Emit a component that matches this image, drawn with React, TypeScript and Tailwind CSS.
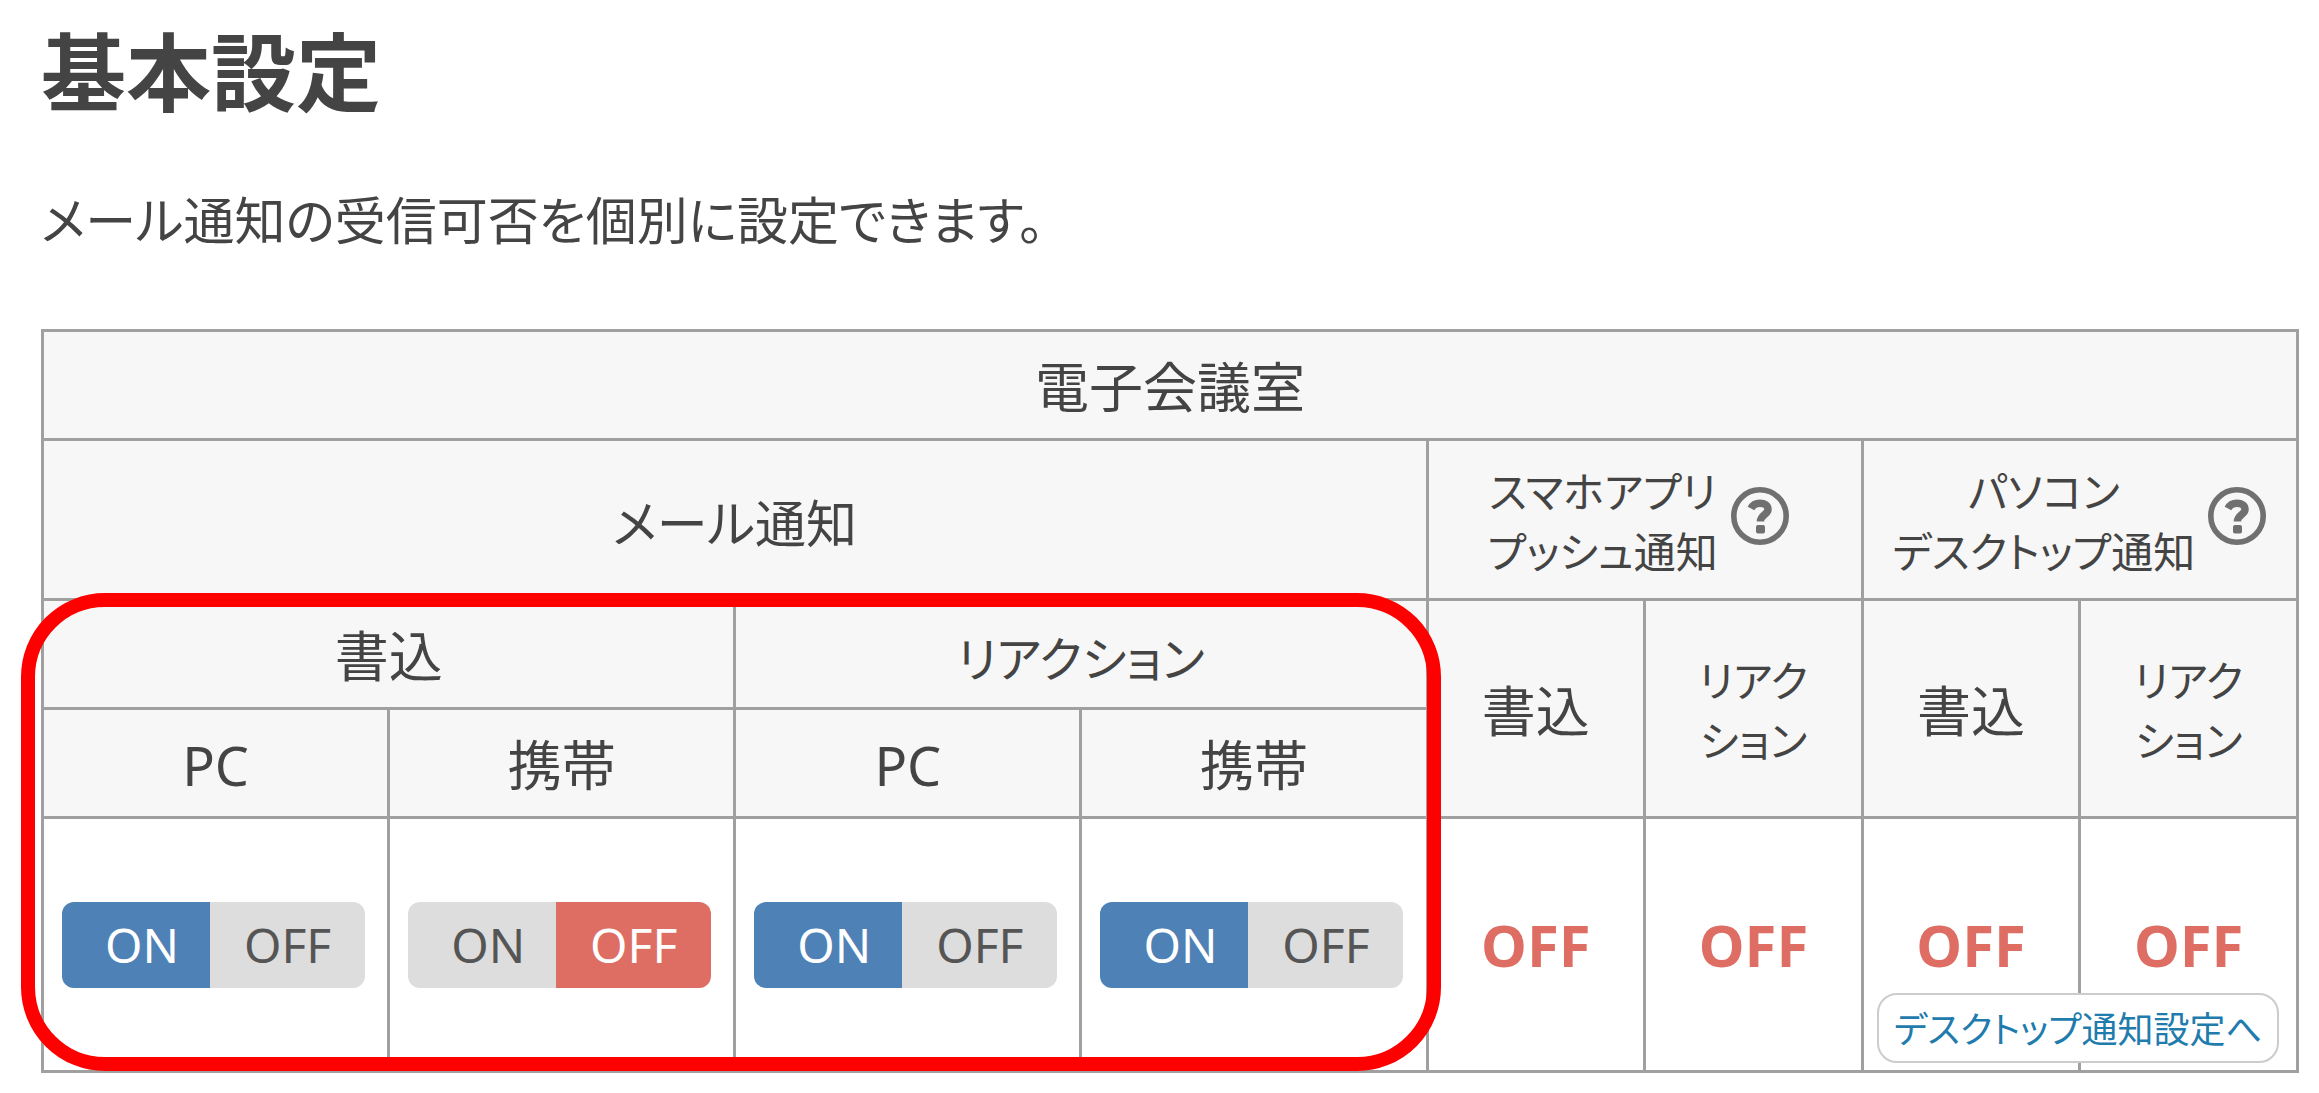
import React, { useState } from "react";

interface IToggle {
  name: string;
  label: string;
  initial: boolean;
}

const Toggle: React.FC<IToggle> = ({ name, label, initial }: IToggle) => {
  const [on, setOn] = useState(initial);

  return (
    <div
      role="radiogroup"
      aria-label={label}
      className="mr-1 inline-flex h-[86px] overflow-hidden rounded-xl align-middle text-5xl leading-none"
    >
      <label
        className={`relative flex w-[148px] cursor-pointer items-center justify-center pl-3 ${
          on ? "bg-[#4e81b6] text-white" : "bg-[#dddddd] text-[#555555]"
        }`}
      >
        <input
          type="radio"
          name={name}
          checked={on}
          onChange={() => setOn(true)}
          className="sr-only"
        />
        ON
      </label>
      <label
        className={`relative flex w-[155px] cursor-pointer items-center justify-center ${
          on ? "bg-[#dddddd] text-[#555555]" : "bg-[#de6e64] text-white"
        }`}
      >
        <input
          type="radio"
          name={name}
          checked={!on}
          onChange={() => setOn(false)}
          className="sr-only"
        />
        OFF
      </label>
    </div>
  );
};

interface IHelp {
  label: string;
}

const HelpButton: React.FC<IHelp> = ({ label }: IHelp) => {
  return (
    <button type="button" aria-label={label} className="shrink-0 pb-3 text-[#707070]">
      <svg className="size-[60px]" viewBox="0 0 60 60" fill="none">
        <circle cx="30" cy="30" r="26.2" stroke="currentColor" strokeWidth="5.600" />
        <path
          d="M21 22.500C23 18.500 26 17.300 30 17.300c4.500 0 8 2.200 8 6.200 0 5-7.600 5.500-7.600 12"
          stroke="currentColor"
          strokeWidth="7.500"
        />
        <rect x="26" y="39" width="9" height="8.500" rx="2" fill="currentColor" />
      </svg>
    </button>
  );
};

const toggles = [
  { name: "write-pc", label: "書込 PC", initial: true },
  { name: "write-mobile", label: "書込 携帯", initial: false },
  { name: "reaction-pc", label: "リアクション PC", initial: true },
  { name: "reaction-mobile", label: "リアクション 携帯", initial: true },
];

const th = "border-3 border-[#a0a0a0] bg-[#f7f7f7] px-0 pt-1 pb-0 text-center font-normal";
const td = "border-3 border-[#a0a0a0] p-0 text-center";

const App: React.FC = () => {
  return (
    <main className="min-h-screen bg-white pt-6 pr-5 pb-5 pl-[41px] font-['Noto_Sans','Noto_Sans_CJK_JP',sans-serif] text-[#444444] [font-feature-settings:'palt']">
      <h1 className="text-[85px] leading-24 font-bold">基本設定</h1>
      <p className="mt-16 text-[51px] leading-[72px]">
        メール通知の受信可否を個別に設定できます。
      </p>

      <div className="relative mt-[73px]">
        <table className="w-full table-fixed border-collapse text-[54px] leading-none">
          <colgroup>
            <col className="w-[15.35%]" />
            <col className="w-[15.35%]" />
            <col className="w-[15.35%]" />
            <col className="w-[15.35%]" />
            <col className="w-[9.65%]" />
            <col className="w-[9.65%]" />
            <col className="w-[9.65%]" />
            <col className="w-[9.65%]" />
          </colgroup>
          <thead>
            <tr className="h-[109px]">
              <th colSpan={8} className={th}>
                電子会議室
              </th>
            </tr>
            <tr className="h-40">
              <th colSpan={4} className={th}>
                <span className="text-[51px]">メール通知</span>
              </th>
              <th colSpan={2} className={th}>
                <div className="flex items-center justify-center gap-3 pr-3 text-[42px] leading-[60px]">
                  <span>
                    スマホアプリ
                    <br />
                    プッシュ通知
                  </span>
                  <HelpButton label="スマホアプリプッシュ通知とは" />
                </div>
              </th>
              <th colSpan={2} className={th}>
                <div className="flex items-center justify-center gap-3 text-[42px] leading-[60px]">
                  <span>
                    パソコン
                    <br />
                    デスクトップ通知
                  </span>
                  <HelpButton label="パソコンデスクトップ通知とは" />
                </div>
              </th>
            </tr>
            <tr className="h-[109px]">
              <th colSpan={2} className={th}>
                書込
              </th>
              <th colSpan={2} className={th}>
                <span className="text-5xl leading-none">リアクション</span>
              </th>
              <th rowSpan={2} className={th}>
                書込
              </th>
              <th rowSpan={2} className={th}>
                <div className="text-[42px] leading-[60px]">
                  リアク
                  <br />
                  ション
                </div>
              </th>
              <th rowSpan={2} className={th}>
                書込
              </th>
              <th rowSpan={2} className={th}>
                <div className="text-[42px] leading-[60px]">
                  リアク
                  <br />
                  ション
                </div>
              </th>
            </tr>
            <tr className="h-[109px]">
              <th className={th}>PC</th>
              <th className={th}>携帯</th>
              <th className={th}>PC</th>
              <th className={th}>携帯</th>
            </tr>
          </thead>
          <tbody className="[&_strong]:text-[58px] [&_strong]:text-[#de6e64]">
            <tr className="h-[254px]">
              {toggles.map((t) => (
                <td key={t.name} className={td}>
                  <Toggle name={t.name} label={t.label} initial={t.initial} />
                </td>
              ))}
              <td className={td}>
                <strong>OFF</strong>
              </td>
              <td className={td}>
                <strong>OFF</strong>
              </td>
              <td className={td}>
                <strong>OFF</strong>
              </td>
              <td className={td}>
                <strong>OFF</strong>
              </td>
            </tr>
          </tbody>
        </table>

        {/* link to the desktop settings, spans the last two cells */}
        <a
          href="#desktop"
          className="absolute right-5 bottom-[10px] flex h-[70px] w-[402px] items-center justify-center rounded-[20px] border-2 border-[#cccccc] bg-white pt-1 text-4xl leading-none whitespace-nowrap text-[#1f7cad]"
        >
          デスクトップ通知設定へ
        </a>

        {/* red frame around the mail settings */}
        <div className="pointer-events-none absolute top-[264px] right-[38%] bottom-0.5 -left-5 rounded-[84px] border-14 border-[#ff0000]"></div>
      </div>
    </main>
  );
};

export default App;
